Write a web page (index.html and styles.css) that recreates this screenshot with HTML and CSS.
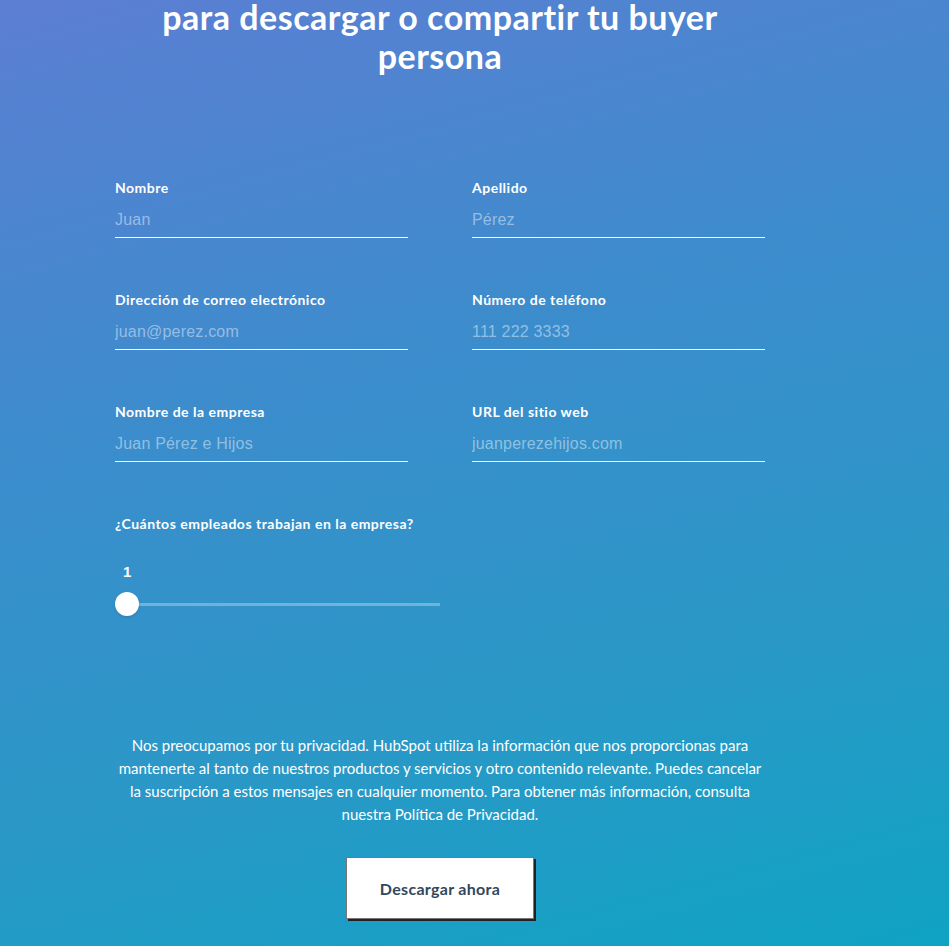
FILE: index.html
```html
<!DOCTYPE html>
<html lang="es">
<head>
<meta charset="utf-8">
<title>Buyer persona</title>
<link rel="stylesheet" href="styles.css">
</head>
<body>
<main class="page">
  <h1 class="title">para descargar o compartir tu buyer<br>persona</h1>
  <form class="form">
    <div class="grid">
      <div class="field">
        <label class="label">Nombre</label>
        <input class="input" type="text" placeholder="Juan">
      </div>
      <div class="field">
        <label class="label">Apellido</label>
        <input class="input" type="text" placeholder="Pérez">
      </div>
      <div class="field">
        <label class="label">Dirección de correo electrónico</label>
        <input class="input" type="text" placeholder="juan@perez.com">
      </div>
      <div class="field">
        <label class="label">Número de teléfono</label>
        <input class="input" type="text" placeholder="111 222 3333">
      </div>
      <div class="field">
        <label class="label">Nombre de la empresa</label>
        <input class="input" type="text" placeholder="Juan Pérez e Hijos">
      </div>
      <div class="field">
        <label class="label">URL del sitio web</label>
        <input class="input" type="text" placeholder="juanperezehijos.com">
      </div>
    </div>
    <div class="employees">
      <div class="label">¿Cuántos empleados trabajan en la empresa?</div>
      <div class="value">1</div>
      <div class="slider">
        <div class="track"></div>
        <div class="thumb"></div>
      </div>
    </div>
    <p class="privacy">Nos preocupamos por tu privacidad. HubSpot utiliza la información que nos proporcionas para mantenerte al tanto de nuestros productos y servicios y otro contenido relevante. Puedes cancelar la suscripción a estos mensajes en cualquier momento. Para obtener más información, consulta nuestra Política de Privacidad.</p>
    <div class="actions">
      <button class="button" type="button">Descargar ahora</button>
    </div>
  </form>
</main>
</body>
</html>
```

FILE: styles.css
```css
html, body {
  margin: 0;
  padding: 0;
  height: 100%;
}
body {
  background: linear-gradient(165deg, #5c7ed3 0%, #3b8dcc 40%, #2a98c7 70%, #0fa3c3 100%);
  font-family: "Lato", "Open Sans", sans-serif;
  color: #fff;
  overflow: hidden;
}
.page {
  width: 880px;
  display: flex;
  flex-direction: column;
  align-items: center;
}
.title {
  margin: -3px 0 0;
  font-size: 34px;
  line-height: 39px;
  font-weight: 700;
  letter-spacing: 0.5px;
  text-align: center;
}
.form {
  width: 650px;
  margin-top: 105px;
  display: flex;
  flex-direction: column;
}
.grid {
  display: grid;
  grid-template-columns: 293px 293px;
  column-gap: 64px;
  row-gap: 54px;
}
.field {
  display: flex;
  flex-direction: column;
}
.label {
  font-size: 14px;
  line-height: 16px;
  font-weight: 700;
  letter-spacing: 0.5px;
  color: #fff;
}
.input {
  margin-top: 10px;
  height: 32px;
  box-sizing: border-box;
  border: 0;
  border-bottom: 1px solid #fff;
  background: transparent;
  padding: 0 0 4px;
  font-family: "Liberation Sans", Arial, sans-serif;
  font-size: 16px;
  letter-spacing: 0.2px;
  color: #fff;
  outline: none;
}
.input::placeholder {
  color: rgba(255, 255, 255, 0.45);
}
.employees {
  margin-top: 54px;
  display: flex;
  flex-direction: column;
}
.value {
  margin-top: 32px;
  margin-left: 8px;
  font-family: "Liberation Sans", Arial, sans-serif;
  font-size: 15px;
  font-weight: 700;
  line-height: 16px;
}
.slider {
  position: relative;
  width: 325px;
  height: 24px;
  margin-top: 12px;
  display: flex;
  align-items: center;
}
.track {
  width: 100%;
  height: 3px;
  background: rgba(255, 255, 255, 0.3);
}
.thumb {
  position: absolute;
  left: 0;
  top: 0;
  width: 24px;
  height: 24px;
  border-radius: 50%;
  background: #fff;
  box-shadow: 0 1px 3px rgba(0, 0, 0, 0.15);
}
.privacy {
  margin: 118px 0 0;
  font-size: 15px;
  line-height: 23px;
  text-align: center;
  color: #fff;
}
.actions {
  margin-top: 31px;
  display: flex;
  justify-content: center;
}
.button {
  width: 188px;
  height: 62px;
  background: #fff;
  border: 1px solid #777;
  box-shadow: 2px 2px 0 #222;
  font-family: "Lato", "Open Sans", sans-serif;
  font-size: 16px;
  font-weight: 700;
  letter-spacing: 0.3px;
  color: #33475b;
  cursor: pointer;
}
```
